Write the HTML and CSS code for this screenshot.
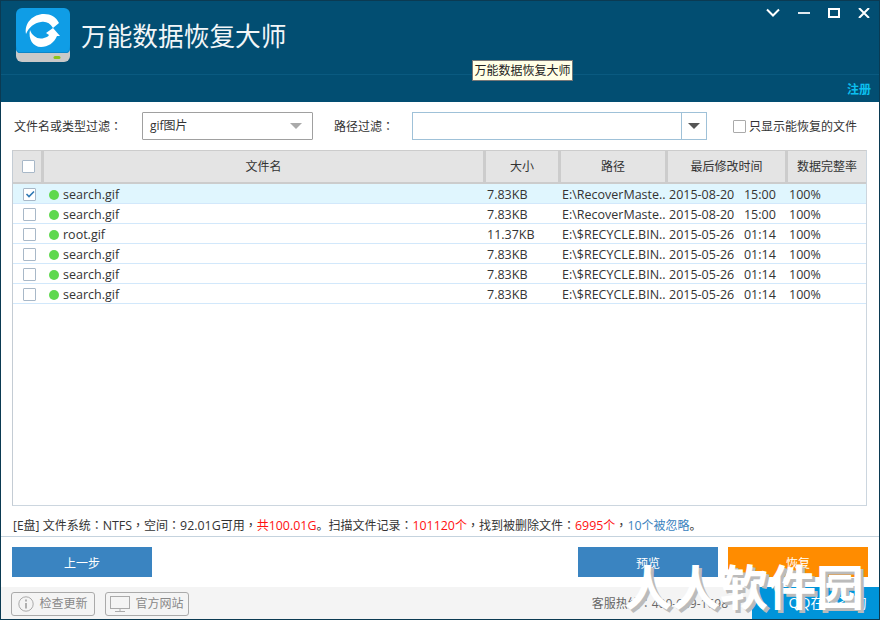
FILE: index.html
```html
<!DOCTYPE html>
<html lang="zh-CN">
<head>
<meta charset="utf-8">
<title>万能数据恢复大师</title>
<link rel="stylesheet" href="styles.css">
</head>
<body>
<div class="window">
  <header class="head">
    <div class="head-top">
      <svg class="logo" width="54" height="54" viewBox="0 0 54 54">
        <path d="M0 38h54v10a6 6 0 0 1-6 6H6a6 6 0 0 1-6-6z" fill="#c9c9c9"/>
        <path d="M6 0h42a6 6 0 0 1 6 6v35q0 3-3 4H3q-3-1-3-4V6a6 6 0 0 1 6-6z" fill="#0f9de6"/>
        <path d="M0 37q0 5 3 7h48q3-2 3-7v2q0 4-3 6H3q-3-2-3-6z" fill="#0b86c9"/>
        <rect x="37.500" y="48" width="7" height="3" rx="1.500" fill="#8ac31c"/>
        <path d="M10 26C8 15 17 6 28 6c7 0 12 3 15 9l-6 5c-3-5-7-7-12-6-7 1-12 5-15 12z" fill="#fff"/>
        <path d="M14 22c2 6 8 10 14 8 2-1 4-1 5-3l-3-2 7-5 7 8-3 0c-3 7-9 11-16 11-8 0-13-8-11-17z" fill="#fff"/>
      </svg>
      <div class="app-title">万能数据恢复大师</div>
      <div class="controls">
        <svg width="14" height="10" viewBox="0 0 14 10"><path d="M1 1.500l6 6 6-6" fill="none" stroke="#fff" stroke-width="2"/></svg>
        <svg width="12" height="10" viewBox="0 0 12 10"><path d="M0 5h12" stroke="#dfe9ef" stroke-width="2"/></svg>
        <svg width="12" height="10" viewBox="0 0 12 10"><rect x="1" y="1" width="10" height="8" fill="none" stroke="#fff" stroke-width="2"/></svg>
        <svg width="12" height="10" viewBox="0 0 12 10"><path d="M1 0l10 10M11 0L1 10" stroke="#fff" stroke-width="2"/></svg>
      </div>
    </div>
    <div class="head-sub"><a class="register">注册</a></div>
  </header>

  <section class="filters">
    <span class="flabel">文件名或类型过滤<span class="p" lang="zh-TW">：</span></span>
    <div class="select"><span>gif图片</span><i class="tri tri-light"></i></div>
    <span class="flabel path-label">路径过滤<span class="p" lang="zh-TW">：</span></span>
    <div class="combo"><div class="combo-input"></div><div class="combo-btn"><i class="tri tri-dark"></i></div></div>
    <label class="only"><i class="cb cb-plain"></i><span class="only-text">只显示能恢复的文件</span></label>
  </section>

  <section class="table">
    <div class="row thead">
      <div class="c c0"><i class="cb"></i></div>
      <div class="c c1">文件名</div>
      <div class="c c2">大小</div>
      <div class="c c3">路径</div>
      <div class="c c4">最后修改时间</div>
      <div class="c c5">数据完整率</div>
    </div>
    <div class="row tr sel">
      <div class="c c0"><i class="cb"><svg width="10" height="10" viewBox="0 0 10 10"><path d="M1.500 5l2.500 2.500 5-5" fill="none" stroke="#2f7ab5" stroke-width="1.600"/></svg></i></div>
      <div class="c c1"><i class="dot"></i>search.gif</div><div class="c c2">7.83KB</div><div class="c c3">E:\RecoverMaste..</div><div class="c c4">2015-08-20&nbsp;&nbsp;&nbsp;15:00</div><div class="c c5">100%</div>
    </div>
    <div class="row tr">
      <div class="c c0"><i class="cb"></i></div>
      <div class="c c1"><i class="dot"></i>search.gif</div><div class="c c2">7.83KB</div><div class="c c3">E:\RecoverMaste..</div><div class="c c4">2015-08-20&nbsp;&nbsp;&nbsp;15:00</div><div class="c c5">100%</div>
    </div>
    <div class="row tr">
      <div class="c c0"><i class="cb"></i></div>
      <div class="c c1"><i class="dot"></i>root.gif</div><div class="c c2">11.37KB</div><div class="c c3">E:\$RECYCLE.BIN..</div><div class="c c4">2015-05-26&nbsp;&nbsp;&nbsp;01:14</div><div class="c c5">100%</div>
    </div>
    <div class="row tr">
      <div class="c c0"><i class="cb"></i></div>
      <div class="c c1"><i class="dot"></i>search.gif</div><div class="c c2">7.83KB</div><div class="c c3">E:\$RECYCLE.BIN..</div><div class="c c4">2015-05-26&nbsp;&nbsp;&nbsp;01:14</div><div class="c c5">100%</div>
    </div>
    <div class="row tr">
      <div class="c c0"><i class="cb"></i></div>
      <div class="c c1"><i class="dot"></i>search.gif</div><div class="c c2">7.83KB</div><div class="c c3">E:\$RECYCLE.BIN..</div><div class="c c4">2015-05-26&nbsp;&nbsp;&nbsp;01:14</div><div class="c c5">100%</div>
    </div>
    <div class="row tr">
      <div class="c c0"><i class="cb"></i></div>
      <div class="c c1"><i class="dot"></i>search.gif</div><div class="c c2">7.83KB</div><div class="c c3">E:\$RECYCLE.BIN..</div><div class="c c4">2015-05-26&nbsp;&nbsp;&nbsp;01:14</div><div class="c c5">100%</div>
    </div>
  </section>

  <section class="status">[E盘] 文件系统<span class="p" lang="zh-TW">：</span><span class="n">NTFS</span><span class="p" lang="zh-TW">，</span>空间<span class="p" lang="zh-TW">：</span><span class="n">92.01G</span>可用<span class="p" lang="zh-TW">，</span><b class="red">共<span class="n">100.01G</span></b>。扫描文件记录<span class="p" lang="zh-TW">：</span><b class="red"><span class="n">101120</span>个</b><span class="p" lang="zh-TW">，</span>找到被删除文件<span class="p" lang="zh-TW">：</span><b class="red"><span class="n">6995</span>个</b><span class="p" lang="zh-TW">，</span><b class="blue"><span class="n">10</span>个被忽略</b>。</section>

  <section class="actions">
    <button class="btn">上一步</button>
    <div class="spacer"></div>
    <button class="btn">预览</button>
    <button class="btn btn-orange">恢复</button>
  </section>

  <footer class="foot">
    <a class="fbtn">
      <svg width="16" height="16" viewBox="0 0 16 16"><circle cx="8" cy="8" r="7.200" fill="none" stroke="#aaa"/><path d="M8 3.500v2M8 7v5.500" stroke="#999" stroke-width="1.500"/></svg>
      检查更新</a>
    <a class="fbtn">
      <svg width="20" height="16" viewBox="0 0 20 16"><rect x="0.500" y="0.500" width="19" height="12" fill="none" stroke="#aaa"/><path d="M10 13v2M5 15.500h10" stroke="#aaa"/></svg>
      官方网站</a>
    <div class="spacer"></div>
    <span class="hotline">客服热线<span class="p" lang="zh-TW">：</span>400-689-1698</span>
    <a class="qq">QQ在线咨询</a>
  </footer>

  <div class="tooltip">万能数据恢复大师</div>
  <div class="watermark">人人软件园</div>
</div>
</body>
</html>
```
FILE: styles.css
```css
* { box-sizing: border-box; }
html, body { margin: 0; padding: 0; }
body { width: 880px; height: 620px; overflow: hidden; background: #fff; font: 12px/20px "Open Sans", "Noto Sans CJK SC", sans-serif; color: #222; }
.window { position: relative; width: 880px; height: 620px; border: 1px solid #0b3a52; display: flex; flex-direction: column; background: #fff; }
.head { height: 101px; background: #024e72; color: #fff; display: flex; flex-direction: column; flex: none; }
.head-top { box-sizing: content-box; height: 66px; padding: 7px 0 0 15px; display: flex; align-items: flex-start; border-bottom: 1px solid #0a5a80; }
.logo { flex: none; }
.app-title { font: 25.7px/30px "Noto Sans CJK SC", sans-serif; margin: 12px 0 0 11px; color: #f2f6f8; }
.controls { margin-left: auto; display: flex; gap: 18px; padding: 0 9px 0 0; height: 10px; align-items: center; }
.head-sub { flex: 1; display: flex; justify-content: flex-end; padding: 6px 8px 0 0; }
.register { font: bold 12px/16px "Noto Sans CJK SC", sans-serif; color: #0cc0f0; }
.p { font-family: "Noto Sans CJK TC", sans-serif; }
.n { font-size: 12.4px; }
.filters { height: 48px; flex: none; display: flex; align-items: center; padding: 0 0 0 13px; }
.flabel { width: 128px; color: #333; padding-top: 1px; }
.path-label { width: 78px; margin-left: 21px; }
.select { width: 171px; height: 28px; border: 1px solid #a0a0a0; border-radius: 1px; display: flex; align-items: center; justify-content: space-between; padding: 0 10px 0 7px; color: #333; }
.tri { display: block; width: 0; height: 0; border-style: solid; border-width: 6px 6px 0; border-color: #aaa transparent transparent; }
.tri-dark { border-color: #555 transparent transparent; }
.combo { width: 295px; height: 28px; border: 1px solid #9fc1d8; display: flex; }
.combo-input { flex: 1; }
.combo-btn { width: 25px; border-left: 1px solid #9fc1d8; display: flex; align-items: center; justify-content: center; }
.only { display: flex; align-items: center; margin-left: 26px; color: #333; }
.only-text { padding-top: 1px; }
.cb { display: inline-flex; align-items: center; justify-content: center; width: 13px; height: 13px; border: 1px solid #a8b8c8; background: #fff; border-radius: 1px; flex: none; }
.cb-plain { margin-right: 3px; border-color: #aaa; }
.table { height: 356px; flex: none; margin: 0 12px 0 11px; border: 1px solid #ccd6df; border-top: 1px solid #ccc; border-left-color: #c4ccd4; }
.row { display: grid; grid-template-columns: 31px 442px 75px 107px 120px 78px; }
.thead { height: 33px; background: #e4e4e4; border-bottom: 2px solid #ccc; }
.thead .c { justify-content: center; border-right: 3px solid #ccc; }
.thead .c0 { justify-content: flex-start; padding-left: 9px; }
.thead .c5 { border-right: 0; }
.tr { height: 20px; padding-top: 1px; border-bottom: 1px solid #d2e8fb; font-size: 12.5px; }
.sel { background: #e0f6fe; }
.c { display: flex; align-items: center; white-space: nowrap; overflow: hidden; color: #333; }
.tr .c0 { padding-left: 10px; }
.tr .c1 { padding: 1px 0 0 5px; }
.tr .c2, .tr .c3, .tr .c4, .tr .c5 { padding: 1px 0 0 1px; }
.dot { width: 10px; height: 10px; border-radius: 50%; background: #5fd84e; margin-right: 4px; flex: none; }
.status { height: 31px; flex: none; margin: 0; padding: 9px 0 0 12px; line-height: 20px; border-bottom: 1px solid #c5d3de; color: #333; white-space: nowrap; }
.red { color: #f11; font-weight: normal; }
.blue { color: #3a83be; font-weight: normal; }
.actions { height: 50px; flex: none; display: flex; gap: 10px; padding: 10px 11px 0 11px; }
.spacer { flex: 1; }
.btn { width: 140px; height: 30px; border: 0; background: #3a84c1; color: #fff; font: 12px "Noto Sans CJK SC", sans-serif; padding: 0; }
.btn-orange { background: #ff8c00; }
.foot { flex: 1; background: #f4f4f4; display: flex; align-items: center; padding-left: 10px; gap: 10px; color: #888; }
.fbtn { width: 84px; height: 24px; border: 1px solid #aaa; border-radius: 3px; display: flex; align-items: center; justify-content: center; gap: 5px; color: #888; margin-top: 2px; }
.hotline { color: #666; margin-right: 14px; }
.qq { width: 127px; height: 32px; background: #0094da; color: #fff; display: flex; align-items: center; justify-content: center; padding-left: 24px; font-size: 14px; align-self: flex-end; }
.tooltip { position: absolute; left: 471px; top: 59px; width: 101px; height: 21px; background: #ffffe6; border: 1px solid #777; color: #222; line-height: 20px; text-align: center; white-space: nowrap; }
.watermark { position: absolute; left: 623px; top: 553px; font: bold 48px/60px "Noto Sans CJK SC", sans-serif; color: #fff; text-shadow: 3px 3px 0 #bbb; white-space: nowrap; }
```
